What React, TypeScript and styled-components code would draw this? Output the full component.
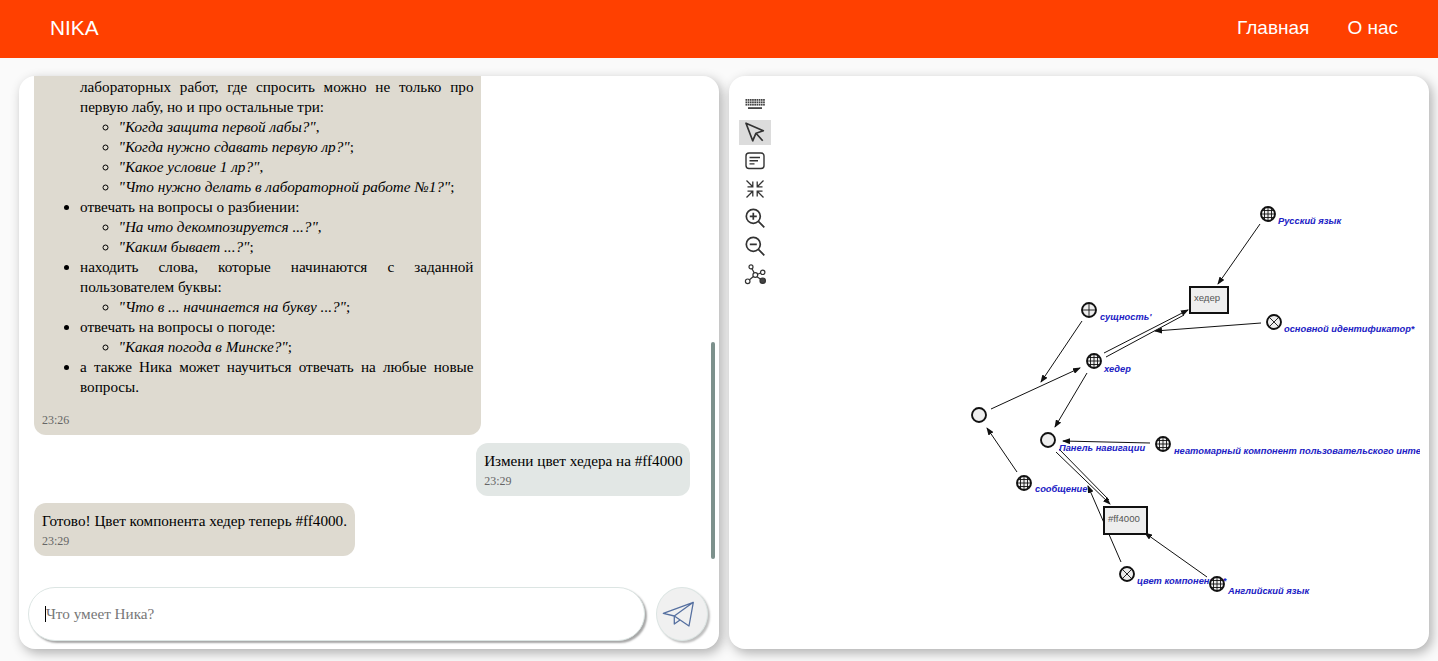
import styled, { createGlobalStyle } from 'styled-components';

const GlobalStyle = createGlobalStyle`
  html, body {
    margin: 0;
    height: 100%;
    overflow: hidden;
    background: #fafafa;
  }
`;

const Page = styled.div`
  height: 100vh;
  display: flex;
  flex-direction: column;
`;

const Header = styled.header`
  height: 58px;
  flex: none;
  background: #ff4000;
  display: flex;
  align-items: center;
  justify-content: space-between;
  padding: 0 40px 2px 50px;
  box-sizing: border-box;
  color: #fff;
  font-family: 'Liberation Sans', Arial, sans-serif;
`;

const Logo = styled.div`
  font-size: 20.8px;
`;

const Nav = styled.nav`
  display: flex;
  gap: 38px;
  font-size: 19px;
`;

const Main = styled.main`
  flex: 1;
  min-height: 0;
  display: flex;
  gap: 10px;
  padding: 18px 9px 12px 19px;
`;

const Panel = styled.section`
  position: relative;
  flex: 1;
  min-width: 0;
  display: flex;
  background: #fff;
  border-radius: 16px;
  box-shadow: 3px 4px 12px rgba(0, 0, 0, 0.3);
  overflow: hidden;
`;

const Chat = styled(Panel)`
  flex-direction: column;
  font-family: 'Liberation Serif', 'Times New Roman', serif;
  font-size: 15.2px;
  line-height: 20px;
  color: #000;
`;

const Messages = styled.div`
  flex: 1;
  min-height: 0;
  display: flex;
  flex-direction: column;
  justify-content: flex-end;
  gap: 7.5px;
  padding: 0 29px 10px 15px;
  overflow: hidden;
`;

const Bubble = styled.div<{ $mine?: boolean; $wide?: boolean }>`
  flex: none;
  align-self: ${(p) => (p.$mine ? 'flex-end' : 'flex-start')};
  width: ${(p) => (p.$wide ? '447px' : 'auto')};
  box-sizing: border-box;
  padding: 8px 7.5px 7px 8px;
  border-radius: 12px;
  background: ${(p) => (p.$mine ? '#e2e7e5' : '#dedad0')};
`;

const Time = styled.div`
  margin-top: 3px;
  font-size: 12px;
  line-height: 15px;
  color: #666;
`;

const OuterList = styled.ul`
  margin: 0 0 16px;
  padding-left: 38px;
  text-align: justify;
`;

const InnerList = styled.ul`
  margin: 0;
  padding-left: 38.5px;
  list-style: circle;
  text-align: left;
`;

const ScrollThumb = styled.div`
  position: absolute;
  top: 266px;
  right: 4px;
  width: 4px;
  height: 217px;
  border-radius: 2px;
  background: #7d918c;
`;

const Compose = styled.form`
  flex: none;
  display: flex;
  gap: 11px;
  padding: 21px 11px 8px 9px;
`;

const InputWrap = styled.div`
  position: relative;
  flex: 1;
  height: 54px;

  &::before {
    content: '';
    position: absolute;
    left: 17px;
    top: 19px;
    width: 1px;
    height: 16px;
    background: #000;
  }
`;

const MessageInput = styled.input`
  width: 100%;
  height: 100%;
  box-sizing: border-box;
  padding: 0 16px 0 17px;
  border: 1.5px solid #dce5e3;
  border-radius: 27px;
  background: #fff;
  box-shadow: 2px 2px 2px rgba(0, 0, 0, 0.35);
  outline: none;
  caret-color: transparent;
  font-family: 'Liberation Serif', 'Times New Roman', serif;
  font-size: 15.2px;

  &::placeholder {
    color: #777;
  }
`;

const SendButton = styled.button`
  flex: none;
  width: 52px;
  height: 54px;
  padding: 0;
  display: flex;
  align-items: center;
  justify-content: center;
  border: 1.5px solid #dce5e3;
  border-radius: 50%;
  background: #f0f0f0;
  box-shadow: 2px 2px 2px rgba(0, 0, 0, 0.25);
`;

const Toolbar = styled.div`
  flex: none;
  width: 32px;
  margin-left: 10px;
  padding-top: 15px;
  display: flex;
  flex-direction: column;
  gap: 3.6px;
`;

const ToolButton = styled.div<{ $active?: boolean }>`
  height: 25px;
  display: flex;
  align-items: center;
  justify-content: center;
  background: ${(p) => (p.$active ? '#dcdcdc' : 'transparent')};
  color: #333;
`;

const Canvas = styled.svg`
  flex: none;
  width: 649px;
  height: 573px;
  overflow: hidden;
`;

const Edge = styled.line`
  stroke: #111;
  stroke-width: 1;
`;

const Ring = styled.circle`
  stroke: #111;
  stroke-width: 1.9;
  fill: #eee;
`;

const Hatch = styled.path`
  stroke: #111;
  stroke-width: 0.9;
  fill: none;
`;

const Box = styled.rect`
  stroke: #111;
  stroke-width: 2;
  fill: #eee;
`;

const BoxText = styled.text`
  font-family: 'Liberation Sans', Arial, sans-serif;
  font-size: 9.6px;
  fill: #555;
`;

const Label = styled.text`
  font-family: 'Liberation Sans', Arial, sans-serif;
  font-size: 9.3px;
  font-weight: bold;
  font-style: italic;
  fill: #2020c4;
`;

type NodeKind = 'globe' | 'plus' | 'cross' | 'plain';

const hatches: Record<NodeKind, string> = {
  globe: 'M-7 0H7M-6 -3.5H6M-6 3.5H6M0 -7V7M-3.5 -6V6M3.5 -6V6',
  plus: 'M-7 0H7M0 -7V7',
  cross: 'M-5 -5L5 5M-5 5L5 -5',
  plain: '',
};

const nodes: { x: number; y: number; kind: NodeKind; label?: string; lx?: number; ly?: number }[] = [
  { x: 1268, y: 214, kind: 'globe', label: 'Русский язык', lx: 1278, ly: 224 },
  { x: 1089, y: 310, kind: 'plus', label: "сущность'", lx: 1100, ly: 320 },
  { x: 1094, y: 361, kind: 'globe', label: 'хедер', lx: 1104, ly: 372 },
  { x: 1274, y: 322, kind: 'cross', label: 'основной идентификатор*', lx: 1284, ly: 332 },
  { x: 979, y: 415, kind: 'plain' },
  { x: 1048, y: 440, kind: 'plain', label: 'Панель навигации', lx: 1059, ly: 451 },
  { x: 1163, y: 444, kind: 'globe', label: 'неатомарный компонент пользовательского интерфейса', lx: 1174, ly: 454 },
  { x: 1024, y: 483, kind: 'globe', label: 'сообщение', lx: 1035, ly: 492 },
  { x: 1127, y: 574, kind: 'cross', label: 'цвет компонента*', lx: 1137, ly: 584 },
  { x: 1217, y: 584, kind: 'globe', label: 'Английский язык', lx: 1228, ly: 594 },
];

const edges = [
  [1260, 224, 1218, 284],
  [1082, 321, 1041, 382],
  [1261, 323, 1155, 331],
  [991, 409, 1080, 368],
  [1087, 373, 1055, 427],
  [1017, 472, 987, 428],
  [1150, 443, 1063, 441],
  [1121, 562, 1088, 486],
  [1207, 577, 1145, 533],
];

const doubleEdges = [
  [1104, 353, 1188, 310, 1106, 357, 1184, 315],
  [1056, 452, 1110, 504, 1059, 449, 1109, 500],
];

function GraphNode({ x, y, kind, label, lx, ly }: (typeof nodes)[number]) {
  return (
    <>
      <Ring cx={x} cy={y} r={7} />
      {hatches[kind] && <Hatch d={hatches[kind]} transform={`translate(${x} ${y})`} />}
      {label && (
        <Label x={lx} y={ly}>
          {label}
        </Label>
      )}
    </>
  );
}

function Graph() {
  return (
    <Canvas viewBox="771 76 649 573">
      <defs>
        <marker id="head" markerWidth="8" markerHeight="6" refX="7" refY="3" orient="auto">
          <path d="M0 0L8 3L0 6z" fill="#111" />
        </marker>
      </defs>
      {edges.map(([x1, y1, x2, y2]) => (
        <Edge key={`${x1}-${y1}`} x1={x1} y1={y1} x2={x2} y2={y2} markerEnd="url(#head)" />
      ))}
      {doubleEdges.map(([a, b, c, d, e, f, g, h]) => (
        <g key={`${a}-${b}`}>
          <Edge x1={a} y1={b} x2={c} y2={d} markerEnd="url(#head)" />
          <Edge x1={e} y1={f} x2={g} y2={h} />
        </g>
      ))}
      <Box x={1190} y={287} width={38} height={26} />
      <BoxText x={1194} y={301}>
        хедер
      </BoxText>
      <Box x={1104} y={507} width={43} height={27} />
      <BoxText x={1108} y={522}>
        #ff4000
      </BoxText>
      {nodes.map((n) => (
        <GraphNode key={`${n.x}-${n.y}`} {...n} />
      ))}
    </Canvas>
  );
}

const keyDots = [0, 1, 2].flatMap((row) =>
  [0, 1, 2, 3, 4, 5, 6, 7, 8].map((col) => ({ x: 0.5 + col * 2.2, y: 1 + row * 2.4 })),
);

function KeyboardIcon() {
  return (
    <svg width="20" height="12" viewBox="0 0 20 12">
      {keyDots.map((d) => (
        <rect key={`${d.x}-${d.y}`} x={d.x} y={d.y} width="1.7" height="1.8" fill="#444" />
      ))}
      <rect x="3" y="9.2" width="14" height="1.8" fill="#444" />
    </svg>
  );
}

function PointerIcon() {
  return (
    <svg width="20" height="20" viewBox="0 0 20 20" fill="none" stroke="currentColor" strokeWidth="1.7">
      <path d="M1 1.2L18.3 8.8L11 11.2L7.7 18.8zM11 11.2L17.7 18.8" strokeLinejoin="round" />
    </svg>
  );
}

function NoteIcon() {
  return (
    <svg width="20" height="18" viewBox="0 0 20 18" fill="none" stroke="currentColor" strokeWidth="1.4">
      <rect x="1" y="1" width="18" height="15.5" rx="3" />
      <path d="M4.5 5.5H15M4.5 8.7H13M4.5 11.9H9.5" />
    </svg>
  );
}

function CollapseIcon() {
  return (
    <svg width="20" height="20" viewBox="0 0 20 20" fill="none" stroke="currentColor" strokeWidth="1.3">
      <path d="M1.5 1.5L7.5 7.5M7.8 2.5V7.8H2.5M18.5 1.5L12.5 7.5M12.2 2.5V7.8H17.5M1.5 18.5L7.5 12.5M7.8 17.5V12.2H2.5M18.5 18.5L12.5 12.5M12.2 17.5V12.2H17.5" />
    </svg>
  );
}

function ZoomIcon({ plus }: { plus?: boolean }) {
  return (
    <svg width="20" height="20" viewBox="0 0 20 20" fill="none" stroke="currentColor" strokeWidth="1.7">
      <circle cx="8.3" cy="8.3" r="7" />
      <path d="M13.4 13.4L19.3 19.3M4.8 8.3H11.8" />
      {plus && <path d="M8.3 4.8V11.8" />}
    </svg>
  );
}

function GraphIcon() {
  return (
    <svg width="22" height="22" viewBox="0 0 22 22" fill="none" stroke="#333" strokeWidth="1.2">
      <circle cx="7" cy="2.9" r="2" />
      <circle cx="18.7" cy="8.3" r="2.2" />
      <circle cx="11.3" cy="11" r="2.4" />
      <circle cx="3.7" cy="17.3" r="2.3" />
      <circle cx="18.7" cy="16.7" r="2.7" fill="#444" />
      <path d="M8 4.7L10.2 8.9M13.5 10.2L16.6 9M9.4 12.5L5.5 15.8M13 12.7L16.7 15.2" />
    </svg>
  );
}

function PlaneIcon() {
  return (
    <svg width="44" height="28" viewBox="0 0 44 28" fill="none" stroke="#5670a0" strokeWidth="1.3" strokeLinejoin="round">
      <path d="M33.3 2.3L3.3 13.3L14.3 16L29 26zM33.3 2.3L14.3 16V24L20 20" />
    </svg>
  );
}

export default function App() {
  return (
    <Page>
      <GlobalStyle />
      <Header>
        <Logo>NIKA</Logo>
        <Nav>
          <span>Главная</span>
          <span>О нас</span>
        </Nav>
      </Header>
      <Main>
        <Chat>
          <Messages>
            <Bubble $wide>
              <OuterList>
                <li>
                  отвечать на вопросы о сроках сдачи и защиты всех лабораторных работ, где спросить можно не только про
                  первую лабу, но и про остальные три:
                  <InnerList>
                    <li>
                      <i>"Когда защита первой лабы?"</i>,
                    </li>
                    <li>
                      <i>"Когда нужно сдавать первую лр?"</i>;
                    </li>
                    <li>
                      <i>"Какое условие 1 лр?"</i>,
                    </li>
                    <li>
                      <i>"Что нужно делать в лабораторной работе №1?"</i>;
                    </li>
                  </InnerList>
                </li>
                <li>
                  отвечать на вопросы о разбиении:
                  <InnerList>
                    <li>
                      <i>"На что декомпозируется ...?"</i>,
                    </li>
                    <li>
                      <i>"Каким бывает ...?"</i>;
                    </li>
                  </InnerList>
                </li>
                <li>
                  находить слова, которые начинаются с заданной пользователем буквы:
                  <InnerList>
                    <li>
                      <i>"Что в ... начинается на букву ...?"</i>;
                    </li>
                  </InnerList>
                </li>
                <li>
                  отвечать на вопросы о погоде:
                  <InnerList>
                    <li>
                      <i>"Какая погода в Минске?"</i>;
                    </li>
                  </InnerList>
                </li>
                <li>а также Ника может научиться отвечать на любые новые вопросы.</li>
              </OuterList>
              <Time>23:26</Time>
            </Bubble>
            <Bubble $mine>
              Измени цвет хедера на #ff4000
              <Time>23:29</Time>
            </Bubble>
            <Bubble>
              Готово! Цвет компонента хедер теперь #ff4000.
              <Time>23:29</Time>
            </Bubble>
          </Messages>
          <ScrollThumb />
          <Compose>
            <InputWrap>
              <MessageInput placeholder="Что умеет Ника?" />
            </InputWrap>
            <SendButton type="button">
              <PlaneIcon />
            </SendButton>
          </Compose>
        </Chat>
        <Panel>
          <Toolbar>
            <ToolButton>
              <KeyboardIcon />
            </ToolButton>
            <ToolButton $active>
              <PointerIcon />
            </ToolButton>
            <ToolButton>
              <NoteIcon />
            </ToolButton>
            <ToolButton>
              <CollapseIcon />
            </ToolButton>
            <ToolButton>
              <ZoomIcon plus />
            </ToolButton>
            <ToolButton>
              <ZoomIcon />
            </ToolButton>
            <ToolButton>
              <GraphIcon />
            </ToolButton>
          </Toolbar>
          <Graph />
        </Panel>
      </Main>
    </Page>
  );
}
